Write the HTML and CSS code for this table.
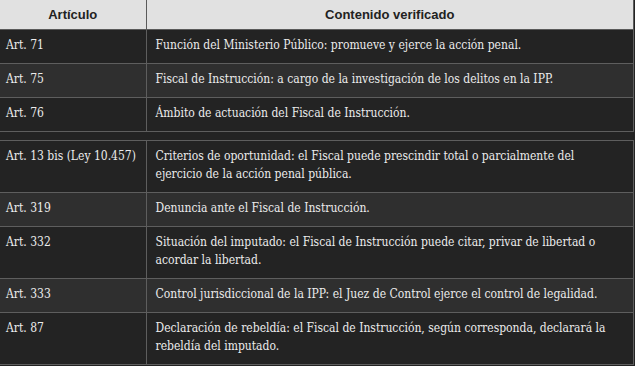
FILE: index.html
```html
<!DOCTYPE html>
<html lang="es">
<head>
<meta charset="utf-8">
<title>Artículos verificados</title>
<link rel="stylesheet" href="styles.css">
</head>
<body>
<table class="tbl">
  <colgroup><col class="c1"><col class="c2"></colgroup>
  <thead>
    <tr><th>Artículo</th><th>Contenido verificado</th></tr>
  </thead>
  <tbody>
    <tr><td>Art. 71</td><td>Función del Ministerio Público: promueve y ejerce la acción penal.</td></tr>
    <tr><td>Art. 75</td><td>Fiscal de Instrucción: a cargo de la investigación de los delitos en la IPP.</td></tr>
    <tr><td>Art. 76</td><td>Ámbito de actuación del Fiscal de Instrucción.</td></tr>
  </tbody>
</table>
<table class="tbl tbl-next">
  <colgroup><col class="c1"><col class="c2"></colgroup>
  <tbody>
    <tr><td>Art. 13 bis (Ley 10.457)</td><td>Criterios de oportunidad: el Fiscal puede prescindir total o parcialmente del ejercicio de la acción penal pública.</td></tr>
    <tr><td>Art. 319</td><td>Denuncia ante el Fiscal de Instrucción.</td></tr>
    <tr><td>Art. 332</td><td>Situación del imputado: el Fiscal de Instrucción puede citar, privar de libertad o acordar la libertad.</td></tr>
    <tr><td>Art. 333</td><td>Control jurisdiccional de la IPP: el Juez de Control ejerce el control de legalidad.</td></tr>
    <tr><td>Art. 87</td><td>Declaración de rebeldía: el Fiscal de Instrucción, según corresponda, declarará la rebeldía del imputado.</td></tr>
  </tbody>
</table>
</body>
</html>
```
FILE: styles.css
```css
html, body {
  margin: 0;
  padding: 0;
  background: #232323;
}

.tbl {
  width: 634px;
  border-collapse: collapse;
  table-layout: fixed;
  font-size: 13px;
  color: #ececec;
}

.tbl-next {
  margin-top: 8px;
}

.c1 { width: 146px; }

.tbl th {
  background: #e1e1e1;
  color: #222;
  font-family: "Liberation Sans", Arial, sans-serif;
  font-weight: bold;
  font-size: 13px;
  line-height: 17px;
  padding: 6px 8px 6px;
  text-align: center;
  border-right: 1px solid #5a5a5a;
  border-bottom: 1px solid #5a5a5a;
}

.tbl td {
  font-family: "DejaVu Serif Condensed", "DejaVu Serif", serif;
  font-size: 12px;
  vertical-align: top;
  line-height: 18px;
  padding: 6px 9px 9px;
  text-align: left;
  border-right: 1px solid #5e5e5e;
  border-top: 1px solid #5e5e5e;
  border-bottom: 1px solid #5e5e5e;
}

.tbl td:first-child {
  padding-left: 6px;
}

.tbl tbody tr:nth-child(odd) td { background: #232323; }
.tbl tbody tr:nth-child(even) td { background: #2f2f2f; }
```
